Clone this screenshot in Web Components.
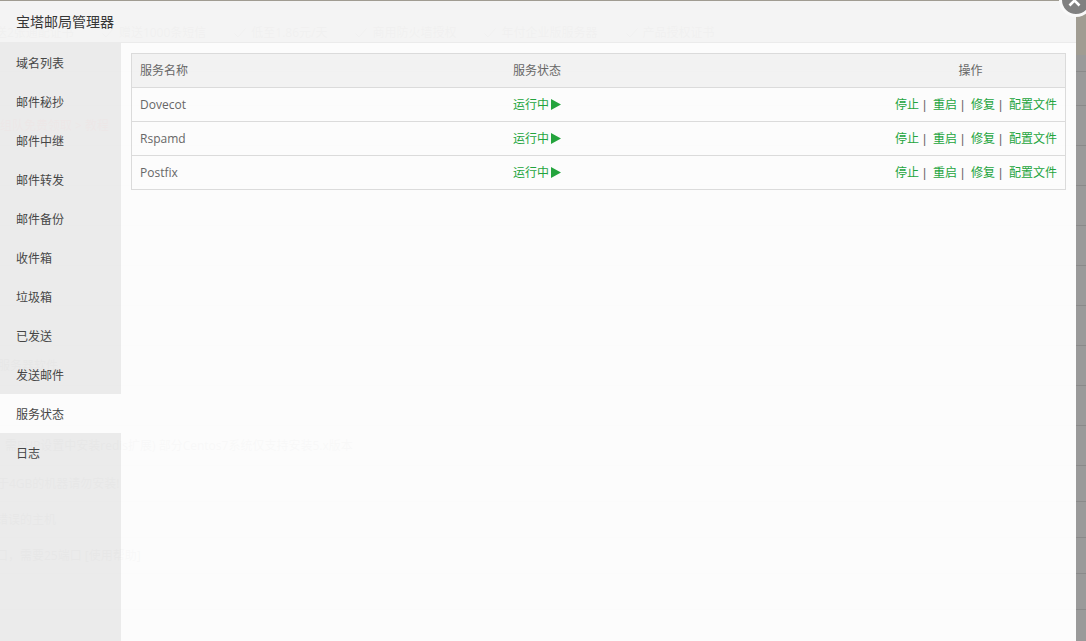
<!DOCTYPE html>
<html lang="zh-CN">
<head>
<meta charset="utf-8">
<title>宝塔邮局管理器</title>
<style>
  html, body { margin: 0; height: 100%; overflow: hidden; background: #9a9a9a; }
  body { font: 12px/1.5 "Open Sans", "Noto Sans CJK SC", sans-serif; color: #666; }
</style>
</head>
<body>
<mail-backdrop>
  <ghost-check>送2张通配证书</ghost-check>
  <ghost-check>赠送1000条短信</ghost-check>
  <ghost-check>低至1.86元/天</ghost-check>
  <ghost-check>商用防火墙授权</ghost-check>
  <ghost-check>年付企业版服务器</ghost-check>
  <ghost-check>产品授权证书</ghost-check>
</mail-backdrop>

<mail-modal heading="宝塔邮局管理器">
  <mail-sidebar slot="nav">
    <nav-item>域名列表</nav-item>
    <nav-item>邮件秘抄</nav-item>
    <nav-item>邮件中继</nav-item>
    <nav-item>邮件转发</nav-item>
    <nav-item>邮件备份</nav-item>
    <nav-item>收件箱</nav-item>
    <nav-item>垃圾箱</nav-item>
    <nav-item>已发送</nav-item>
    <nav-item>发送邮件</nav-item>
    <nav-item active>服务状态</nav-item>
    <nav-item>日志</nav-item>
  </mail-sidebar>
  <status-table>
    <service-row name="Dovecot"></service-row>
    <service-row name="Rspamd"></service-row>
    <service-row name="Postfix"></service-row>
  </status-table>
</mail-modal>

<close-button></close-button>

<script>
function define(name, css, html, init) {
  customElements.define(name, class extends HTMLElement {
    connectedCallback() {
      if (this.shadowRoot) return;
      const root = this.attachShadow({ mode: 'open' });
      root.innerHTML = '<style>' + css + '</style>' + (typeof html === 'function' ? html(this) : html);
      if (init) init(this, root);
    }
  });
}

define('ghost-check', `
  :host { display: flex; align-items: center; flex: none; margin-left: 28px; white-space: nowrap; }
  :host(:first-child) { margin-left: -5px; }
  :host(:first-child) svg { display: none; }
  svg { width: 12px; height: 10px; margin-right: 5px; flex: none; }
`, `<svg viewBox="0 0 12 10"><path d="M0.5 5.5 L4 9 L11.5 0.5" fill="none" stroke="#333" stroke-width="1"/></svg><slot></slot>`);

define('mail-backdrop', `
  :host { display: block; position: fixed; inset: 0; background: #9a9a9a; color: #222; font-size: 12px; overflow: hidden; }
  .banner { height: 55px; background: #a09c92; box-sizing: border-box; padding-top: 24px; display: flex; align-items: flex-start; line-height: 17px; }
  .row { border-bottom: 1px solid #8a8a8a; box-sizing: border-box; display: flex; align-items: center; white-space: nowrap; }
  .red { color: #c22; }
  .h17 { height: 17px; } .h34 { height: 34px; } .h40 { height: 40px; } .h36 { height: 36px; }
`, `<div class="banner"><slot></slot></div>
  <div class="row h17"></div>
  <div class="row h34"></div>
  <div class="row h40 red">组队免费领取 &gt; 教程</div>
  <div class="row h40"></div>
  <div class="row h40"></div>
  <div class="row h40"></div>
  <div class="row h40"></div>
  <div class="row h40"></div>
  <div class="row h40"><span style="margin-left:-2px">服务器软件</span></div>
  <div class="row h40"></div>
  <div class="row h40" style="padding-left:5px">需PHP设置中安装redis扩展) 部分Centos7系统仅支持安装5.x版本</div>
  <div class="row h36"><span style="margin-left:-3px">于4GB的机器请勿安装!</span></div>
  <div class="row h36"><span style="margin-left:-4px">错误的主机</span></div>
  <div class="row h36"><span style="margin-left:-4px">口，需要25端口 [使用帮助]</span></div>
  <div class="row h36"></div>`);

define('mail-modal', `
  :host { display: flex; flex-direction: column; position: absolute; left: 0; top: 1px; width: 1076px; height: 640px; background: #fff; opacity: .97; overflow: hidden; }
  header { flex: none; height: 41px; line-height: 41px; padding-left: 16px; background: #f7f7f7; border-bottom: 1px solid #eee; color: #333; font-size: 14px; }
  .body { flex: 1; display: flex; min-height: 0; }
  .main { flex: 1; padding: 10px; min-width: 0; }
`, el => `<header>${el.getAttribute('heading')}</header><div class="body"><slot name="nav"></slot><div class="main"><slot></slot></div></div>`);

define('mail-sidebar', `
  :host { display: block; flex: none; width: 121px; background: #eee; }
`, `<slot></slot>`);

define('nav-item', `
  :host { display: block; height: 39px; line-height: 42px; padding-left: 16px; color: #444; font-size: 12px; }
  :host([active]) { background: #fff; }
`, `<slot></slot>`);

const columns = 'display: grid; grid-template-columns: 373px 371px 189px; align-items: center;';

define('status-table', `
  :host { display: block; border: 1px solid #ddd; color: #666; }
  .head { ${columns} height: 33px; background: #f5f5f5; }
  .head span { padding-left: 8px; }
  .head span:last-child { padding: 0; text-align: center; }
`, `<div class="head"><span>服务名称</span><span>服务状态</span><span>操作</span></div><slot></slot>`);

define('service-row', `
  :host { ${columns} height: 33px; border-top: 1px solid #ddd; }
  .name, .state { padding-left: 8px; }
  .state { color: #20a53a; display: flex; align-items: center; }
  .state svg { width: 10px; height: 11px; margin-left: 2px; }
  .ops { display: flex; justify-content: flex-end; padding-right: 8px; color: #20a53a; }
  .ops i { font: 12px "Liberation Sans", sans-serif; color: #666; width: 10px; padding-left: 4px; line-height: 18px; }
`, el => `<span class="name">${el.getAttribute('name')}</span>
  <span class="state">运行中<svg viewBox="0 0 10 11"><polygon points="0,0 10,5.5 0,11" fill="#20a53a"/></svg></span>
  <span class="ops"><span>停止</span><i>|</i><span>重启</span><i>|</i><span>修复</span><i>|</i><span>配置文件</span></span>`);

define('close-button', `
  :host { display: block; position: absolute; left: 1059px; top: -17px; width: 34px; height: 34px; box-sizing: border-box; border: 3px solid #f9f9f9; border-radius: 50%; background: #808080; }
  svg { position: absolute; left: 6px; top: 8px; width: 13px; height: 13px; }
`, `<svg viewBox="0 0 13 13"><path d="M1.5 1.5 L11.5 11.5 M11.5 1.5 L1.5 11.5" stroke="#fff" stroke-width="2.6" fill="none"/></svg>`);
</script>
</body>
</html>
